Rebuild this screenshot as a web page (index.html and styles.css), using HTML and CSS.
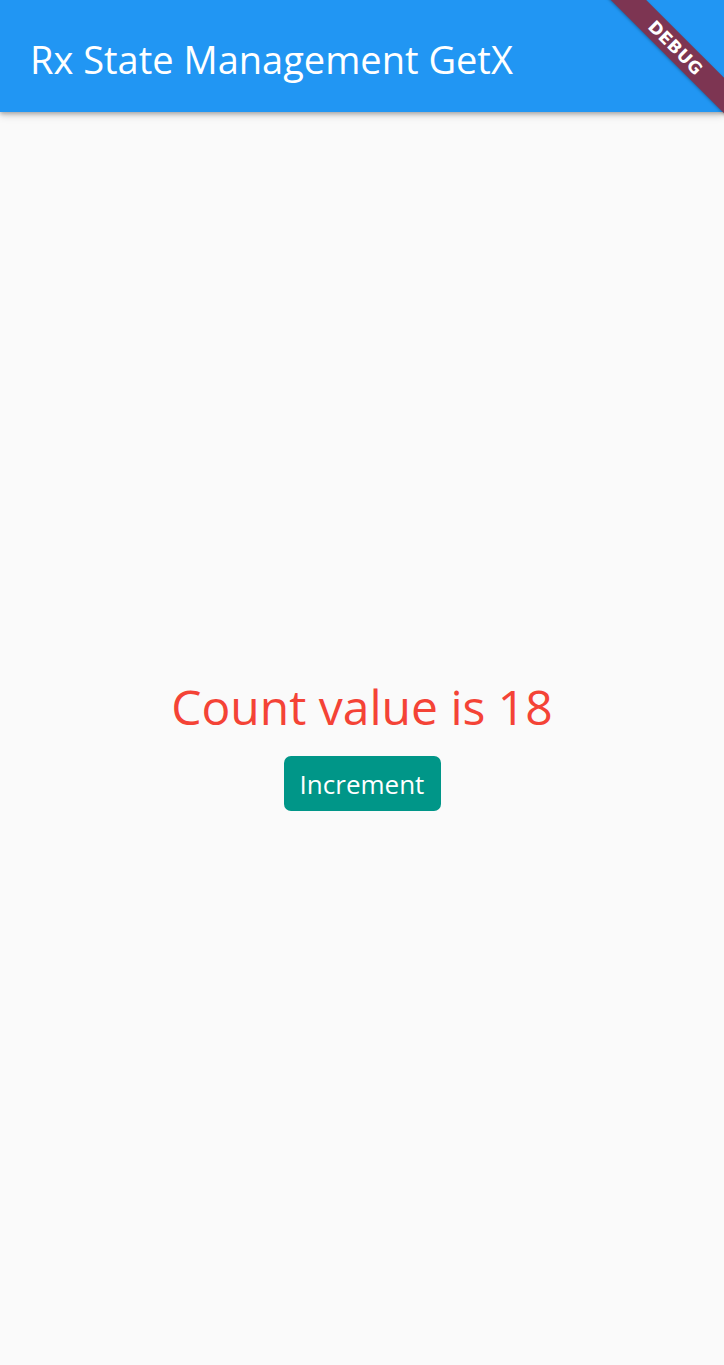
FILE: index.html
```html
<!DOCTYPE html>
<html>
<head>
<meta charset="utf-8">
<link rel="stylesheet" href="styles.css">
</head>
<body>
<div class="screen">
  <header class="appbar">
    <h1 class="title">Rx State Management GetX</h1>
  </header>
  <main class="content">
    <div class="count">Count value is 18</div>
    <button class="btn">Increment</button>
  </main>
  <div class="banner"><span>DEBUG</span></div>
</div>
</body>
</html>
```
FILE: styles.css
```css
html, body {
  margin: 0;
  padding: 0;
}
body {
  width: 724px;
  height: 1365px;
  background: #fafafa;
  font-family: "Open Sans", "Noto Sans", sans-serif;
  overflow: hidden;
}
.screen {
  position: relative;
  width: 724px;
  height: 1365px;
  display: flex;
  flex-direction: column;
  overflow: hidden;
}
.appbar {
  height: 112px;
  flex: none;
  box-sizing: border-box;
  background: #2196f3;
  box-shadow: 0 2px 4px rgba(0,0,0,0.25), 0 4px 8px rgba(0,0,0,0.12);
  display: flex;
  align-items: center;
  padding-left: 30px;
  padding-top: 6px;
  position: relative;
  z-index: 1;
}
.title {
  margin: 0;
  font-weight: 400;
  font-size: 38px;
  color: #ffffff;
  letter-spacing: 0;
  line-height: 1;
}
.content {
  flex: 1;
  display: flex;
  flex-direction: column;
  align-items: center;
  justify-content: center;
  padding-top: 10px;
}
.count {
  color: #f44336;
  font-size: 48px;
  line-height: 62px;
}
.btn {
  margin-top: 18px;
  background: #009688;
  color: #ffffff;
  border: none;
  border-radius: 7px;
  height: 55px;
  width: 157px;
  padding: 0;
  font-family: inherit;
  font-size: 26px;
}
.banner {
  position: absolute;
  left: 576px;
  top: 35px;
  width: 200px;
  height: 25px;
  transform: rotate(45deg);
  background: #7d3552;
  box-shadow: 0 1px 3px rgba(0,0,0,0.3);
  display: flex;
  align-items: center;
  justify-content: center;
  z-index: 2;
}
.banner span {
  color: #fff;
  font-family: "DejaVu Sans", sans-serif;
  font-weight: 700;
  font-size: 17px;
  letter-spacing: 0.5px;
}
```
